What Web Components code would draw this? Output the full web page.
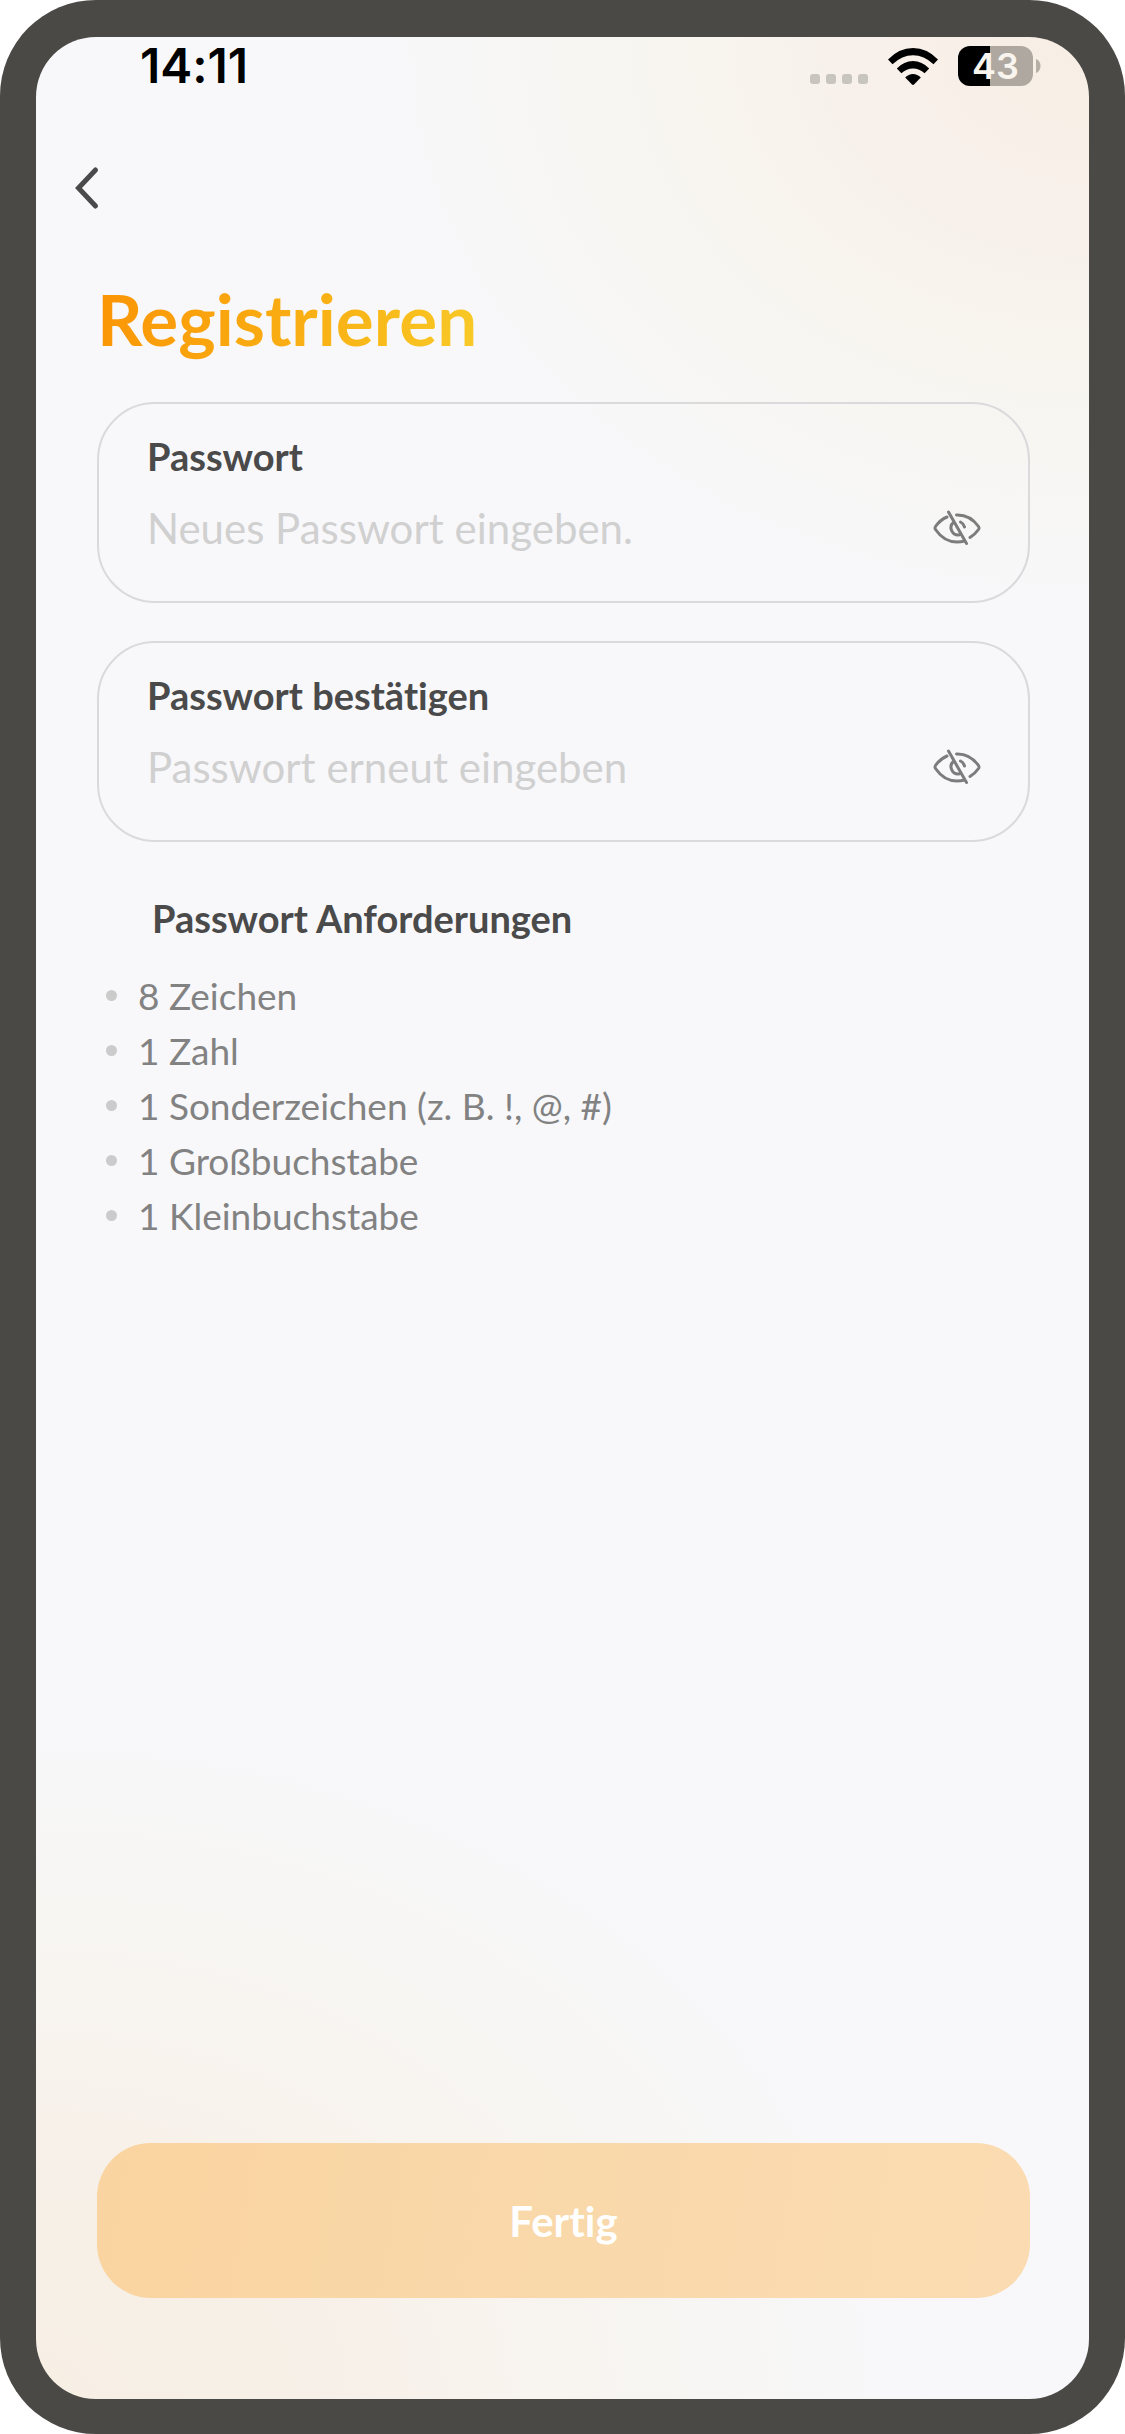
<!DOCTYPE html>
<html lang="de">
<head>
<meta charset="UTF-8">
<meta name="viewport" content="width=device-width, initial-scale=1">
<title>Registrieren</title>
<style>
  body {
    margin: 0;
    background: #fff;
    color: #4a4a4a;
    font-family: Lato, "Open Sans", sans-serif;
    font-variant-ligatures: none;
  }
</style>
</head>
<body>

<phone-frame>
  <status-bar time="14:11" battery="43"></status-bar>
  <back-button></back-button>
  <register-form>
    <gradient-title>Registrieren</gradient-title>
    <password-field placeholder="Neues Passwort eingeben.">Passwort</password-field>
    <password-field placeholder="Passwort erneut eingeben">Passwort bestätigen</password-field>
    <requirement-list>Passwort Anforderungen</requirement-list>
    <submit-button slot="footer">Fertig</submit-button>
  </register-form>
</phone-frame>

<script>
class PhoneFrame extends HTMLElement {
  constructor() {
    super();
    this.attachShadow({ mode: "open" });
    this.shadowRoot.innerHTML = `
      <style>
        :host {
          display: flex;
          box-sizing: border-box;
          min-height: 100vh;
          padding: 37px 36px 35px;
          border-radius: 96px;
          background: #4a4946;
        }

        .screen {
          flex: 1;
          min-width: 0;
          display: flex;
          flex-direction: column;
          border-radius: 60px;
          overflow: hidden;
          background:
            radial-gradient(ellipse 740px 600px at 100% 0, #f7efe4 0%, #f8f0ea 28%, #f8f4ee 50%, #f7f6f3 70%, rgba(248,248,251,0) 100%),
            radial-gradient(ellipse 900px 700px at 0 100%, #f7efe4 0%, #f7f0e8 32%, #f8f4ef 55%, #f7f6f4 76%, rgba(248,248,251,0) 100%),
            #f8f8fb;
        }
      </style>
      <main class="screen"><slot></slot></main>
    `;
  }
}

class StatusBar extends HTMLElement {
  constructor() {
    super();
    this.attachShadow({ mode: "open" });
  }

  connectedCallback() {
    const level = this.getAttribute("battery");

    this.shadowRoot.innerHTML = `
      <style>
        :host {
          display: flex;
          justify-content: space-between;
          align-items: center;
          height: 58px;
          padding: 0 48px 0 104px;
          color: #000;
          font-family: Inter, sans-serif;
          font-weight: 600;
        }

        .time { font-size: 48px; line-height: 58px; }
        .icons { display: flex; align-items: center; }

        .dots {
          display: flex;
          gap: 6px;
          margin: 26px 20px 0 0;
        }
        .dots i {
          width: 10px;
          height: 10px;
          border-radius: 3px;
          background: #c8c4be;
        }

        .wifi { display: block; margin-right: 20px; }

        .battery {
          width: 75px;
          height: 40px;
          border-radius: 12px;
          background: linear-gradient(90deg, #000 ${level}%, #aea8a1 ${level}%);
          color: #f9f5ee;
          font-size: 36px;
          line-height: 40px;
          text-align: center;
        }
        .cap { display: block; margin-left: 3px; }
      </style>

      <span class="time">${this.getAttribute("time")}</span>
      <div class="icons">
        <div class="dots"><i></i><i></i><i></i><i></i></div>
        <svg class="wifi" width="50" height="38" viewBox="0 0 50 38">
          <path d="M0 12.500Q11 1 25 1T50 12.500L45.500 17.300Q36 8.300 25 8.300T4.500 17.300Z"/>
          <path d="M8.800 21.500Q16 14 25 14T41.200 21.500L36.600 26.300Q31.500 21.500 25 21.500T13.400 26.300Z"/>
          <path d="M17.200 30.500Q20.500 27 25 27T32.800 30.500L26 37.500Q25 38.300 24 37.500Z"/>
        </svg>
        <div class="battery">${level}</div>
        <svg class="cap" width="5" height="14" viewBox="0 0 5 14">
          <path fill="#b5afa8" d="M0 0C6 2 6 12 0 14Z"/>
        </svg>
      </div>
    `;
  }
}

class BackButton extends HTMLElement {
  constructor() {
    super();
    this.attachShadow({ mode: "open" });
    this.shadowRoot.innerHTML = `
      <style>
        :host { display: block; padding: 62px 28px 0; }
        button {
          display: block;
          padding: 8px;
          border: 0;
          background: none;
          color: #4a4a4a;
          cursor: pointer;
        }
        svg { display: block; }
      </style>
      <button type="button" aria-label="Zurück">
        <svg width="30" height="46" viewBox="0 0 30 46" fill="none" stroke="currentColor" stroke-width="5" stroke-linecap="round" stroke-linejoin="miter">
          <path d="M23.500 5L6.500 23L23.500 41"/>
        </svg>
      </button>
    `;
  }
}

class RegisterForm extends HTMLElement {
  constructor() {
    super();
    this.attachShadow({ mode: "open" });
    this.shadowRoot.innerHTML = `
      <style>
        :host { display: flex; flex: 1; }
        form {
          flex: 1;
          min-width: 0;
          display: flex;
          flex-direction: column;
          gap: 38px;
          padding: 58px 59px 101px 61px;
        }
        footer { margin-top: auto; }
      </style>
      <form>
        <slot></slot>
        <footer><slot name="footer"></slot></footer>
      </form>
    `;
    this.shadowRoot.querySelector("form").addEventListener("submit", e => e.preventDefault());
  }
}

class GradientTitle extends HTMLElement {
  constructor() {
    super();
    this.attachShadow({ mode: "open" });
    this.shadowRoot.innerHTML = `
      <style>
        :host { display: flex; padding-bottom: 3px; }
        h1 {
          margin: 0;
          font-size: 71px;
          line-height: 84px;
          font-weight: 700;
          background: linear-gradient(110deg, #fb9405, #f9b215 60%, #f8cb28);
          -webkit-background-clip: text;
          background-clip: text;
          color: transparent;
        }
      </style>
      <h1><slot></slot></h1>
    `;
  }
}

class PasswordField extends HTMLElement {
  constructor() {
    super();
    this.attachShadow({ mode: "open" });
  }

  connectedCallback() {
    this.shadowRoot.innerHTML = `
      <style>
        :host {
          display: flex;
          flex-direction: column;
          gap: 27px;
          padding: 32px 47px 48px 48px;
          border: 2px solid #dadadc;
          border-radius: 58px;
        }

        label {
          font-size: 38px;
          line-height: 40px;
          font-weight: 700;
        }

        .row { display: flex; align-items: center; }

        input {
          flex: 1;
          min-width: 0;
          height: 50px;
          padding: 0;
          border: 0;
          outline: 0;
          background: none;
          color: inherit;
          font: 400 42px/50px Lato, sans-serif;
        }
        input::placeholder { color: #d0d0d0; opacity: 1; }

        button {
          padding: 0;
          border: 0;
          background: none;
          color: #7c7c7c;
          cursor: pointer;
        }
        svg { display: block; }
      </style>

      <label for="field"><slot></slot></label>
      <div class="row">
        <input id="field" type="password" placeholder="${this.getAttribute("placeholder")}">
        <button type="button" aria-label="Passwort anzeigen">
          <svg width="48" height="36" viewBox="0 0 48 36" fill="none" stroke="currentColor" stroke-width="3" stroke-linecap="round" stroke-linejoin="round">
            <path d="M14 7Q7 10 2.500 16.500Q1.500 18 2.500 19.500Q11 32 24 32Q28 32 31.500 31"/>
            <path d="M23.500 5Q37 4.500 45.500 16.500Q46.500 18 45.500 19.500Q42 24.500 37 27.500"/>
            <path d="M20.500 12.300A7.200 7.200 0 0 0 26.500 24.800"/>
            <path d="M27.500 12Q30.500 13.500 31.500 17"/>
            <path d="M15.500 2L33.500 33.500"/>
          </svg>
        </button>
      </div>
    `;

    const input = this.shadowRoot.querySelector("input");
    this.shadowRoot.querySelector("button").addEventListener("click", () => {
      input.type = input.type === "password" ? "text" : "password";
    });
  }
}

class RequirementList extends HTMLElement {
  constructor() {
    super();
    this.attachShadow({ mode: "open" });
  }

  get rules() {
    return [
      "8 Zeichen",
      "1 Zahl",
      "1 Sonderzeichen (z. B. !, @, #)",
      "1 Großbuchstabe",
      "1 Kleinbuchstabe"
    ];
  }

  connectedCallback() {
    this.shadowRoot.innerHTML = `
      <style>
        :host { display: block; padding-top: 18px; }

        h2 {
          margin: 0 0 30px 55px;
          font-size: 38px;
          line-height: 40px;
          font-weight: 700;
        }

        ul { list-style: none; margin: 0; padding: 0 0 0 9px; }

        li {
          display: flex;
          align-items: center;
          gap: 21px;
          color: #828282;
          font-size: 37px;
          line-height: 55px;
          font-weight: 400;
        }
        li::before {
          content: "";
          width: 11px;
          height: 11px;
          border-radius: 50%;
          background: #cbcbcb;
        }
      </style>
      <h2><slot></slot></h2>
      <ul>
        ${this.rules.map(rule => `<li>${rule}</li>`).join("")}
      </ul>
    `;
  }
}

class SubmitButton extends HTMLElement {
  constructor() {
    super();
    this.attachShadow({ mode: "open" });
    this.shadowRoot.innerHTML = `
      <style>
        :host { display: block; }
        button {
          display: block;
          width: 100%;
          height: 155px;
          padding: 0;
          border: 0;
          border-radius: 54px;
          background: linear-gradient(100deg, #fad4a0, #f9d8aa 50%, #fbdcb2);
          color: #fff;
          font: 700 42px/50px Lato, sans-serif;
          font-variant-ligatures: none;
          cursor: pointer;
        }
      </style>
      <button type="submit"><slot></slot></button>
    `;
  }
}

customElements.define("phone-frame", PhoneFrame);
customElements.define("status-bar", StatusBar);
customElements.define("back-button", BackButton);
customElements.define("register-form", RegisterForm);
customElements.define("gradient-title", GradientTitle);
customElements.define("password-field", PasswordField);
customElements.define("requirement-list", RequirementList);
customElements.define("submit-button", SubmitButton);
</script>
</body>
</html>
